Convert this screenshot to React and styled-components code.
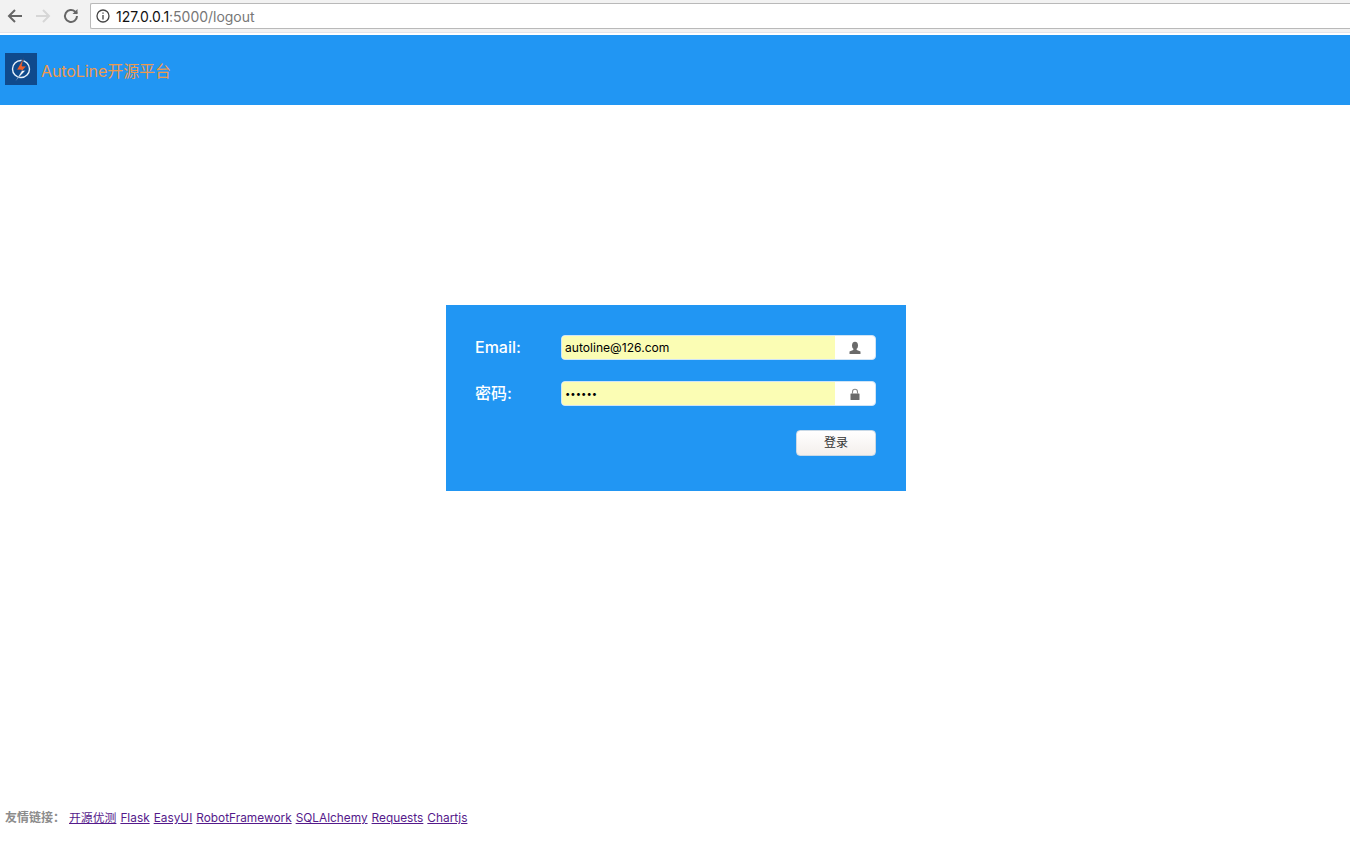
import React from 'react';
import styled, { createGlobalStyle } from 'styled-components';

const GlobalStyle = createGlobalStyle`
  html, body { margin: 0; padding: 0; background: #fff; }
  body { font-family: "Inter", "Liberation Sans", "Noto Sans CJK SC", sans-serif; overflow: hidden; }
`;

const Page = styled.div`
  height: 868px;
  display: flex;
  flex-direction: column;
`;

const BrowserBar = styled.div`
  height: 33px;
  flex: none;
  box-sizing: border-box;
  padding: 3px 0 0 5px;
  display: flex;
  align-items: flex-start;
  background: #f2f2f2;
  border-bottom: 1px solid #e4e4ea;
`;

const NavIcon = styled.svg`
  width: 20px;
  height: 20px;
  margin: 3px 8px 0 0;
  flex: none;
  fill: none;
  stroke: ${p => (p.$off ? '#d6d6d6' : '#666')};
  stroke-width: 2;
`;

const AddressBar = styled.div`
  flex: 1;
  height: 26px;
  box-sizing: border-box;
  margin-left: 1px;
  padding-left: 5px;
  display: flex;
  align-items: center;
  gap: 6px;
  background: #fff;
  border: 1px solid #b9b9b9;
  border-right: 0;
  border-radius: 2px 0 0 2px;
  font-size: 14px;
  letter-spacing: -0.02px;
  color: #777;
`;

const Host = styled.span`
  color: #111;
`;

const Header = styled.header`
  height: 70px;
  flex: none;
  margin-top: 2px;
  padding-left: 5px;
  display: flex;
  align-items: center;
  gap: 4px;
  background: #2196f3;
`;

const Logo = styled.svg`
  width: 32px;
  height: 32px;
  flex: none;
  margin-top: -2px;
`;

const Brand = styled.span`
  font-size: 16px;
  letter-spacing: -0.08px;
  color: #ee9a4d;
`;

const Main = styled.main`
  flex: 1;
  padding: 200px 0 0 2px;
  display: flex;
  justify-content: center;
  align-items: flex-start;
`;

const LoginBox = styled.form`
  width: 460px;
  height: 186px;
  box-sizing: border-box;
  padding: 30px 30px 0 29px;
  display: flex;
  flex-direction: column;
  background: #2196f3;
`;

const Row = styled.div`
  height: 25px;
  margin-bottom: 21px;
  display: flex;
  align-items: center;
`;

const Label = styled.label`
  width: 86px;
  flex: none;
  margin-top: -1px;
  font-size: 16px;
  line-height: 20px;
  font-weight: 500;
  color: #fff;
`;

const Field = styled.div`
  flex: 1;
  height: 25px;
  box-sizing: border-box;
  display: flex;
  align-items: stretch;
  overflow: hidden;
  background: #fff;
  border: 1px solid #cfe4f7;
  border-radius: 4px;
`;

const Input = styled.input`
  flex: 1;
  min-width: 0;
  box-sizing: border-box;
  padding: 0 3px;
  border: 0;
  outline: 0;
  background: #fbfdb4;
  font-family: inherit;
  font-size: ${p => (p.type === 'password' ? '9.5px' : '12.1px')};
  color: #000;
`;

const FieldIcon = styled.svg`
  width: 14px;
  height: 14px;
  flex: none;
  align-self: center;
  margin: 0 13px;
  fill: #6a6a6a;
`;

const Actions = styled.div`
  margin-top: 3px;
  display: flex;
  justify-content: flex-end;
`;

const SubmitButton = styled.button`
  width: 80px;
  height: 26px;
  padding: 0 0 3px;
  background: linear-gradient(#ffffff, #f3efec);
  border: 1px solid #c9d9e6;
  border-radius: 4px;
  font-family: inherit;
  font-size: 12px;
  color: #333;
`;

const Footer = styled.footer`
  height: 58px;
  flex: none;
  padding-left: 5px;
  display: flex;
  align-items: flex-start;
  font-size: 11.85px;
  line-height: 16px;
`;

const FooterLabel = styled.b`
  width: 64px;
  flex: none;
  font-size: 12px;
  color: #8c8c8c;
`;

const FooterLink = styled.a`
  margin-right: 4px;
  color: #551a8b;
  text-decoration: underline;
`;

const links = ['开源优测', 'Flask', 'EasyUI', 'RobotFramework', 'SQLAlchemy', 'Requests', 'Chartjs'];

export default function App() {
  return (
    <Page>
      <GlobalStyle />
      <BrowserBar>
        <NavIcon viewBox="0 0 20 20"><path d="M17 10H4M10 4l-6 6 6 6" /></NavIcon>
        <NavIcon viewBox="0 0 20 20" $off><path d="M3 10h13M10 4l6 6-6 6" /></NavIcon>
        <NavIcon viewBox="0 0 20 20"><path d="M16 10a6 6 0 1 1-1.8-4.3L16 7.5" /><path d="M16.5 3v5h-5" fill="#666" stroke="none" /></NavIcon>
        <AddressBar>
          <svg width="14" height="14" viewBox="0 0 14 14" fill="none" stroke="#444" strokeWidth="1.3">
            <circle cx="7" cy="7" r="6" />
            <path d="M7 6v4.5M7 3.4v1.4" />
          </svg>
          <span><Host>127.0.0.1</Host>:5000/logout</span>
        </AddressBar>
      </BrowserBar>

      <Header>
        <Logo viewBox="0 0 32 32">
          <rect width="32" height="32" fill="#0f4a8c" />
          <circle cx="16" cy="16" r="8.5" fill="none" stroke="#e8f2fb" strokeWidth="1.4" />
          <path d="M19 4l-7.500 13h5l-1 3 6-7h-4.500z" fill="#ef5f2a" stroke="#0f4a8c" strokeWidth="0.8" />
          <path d="M17 17.500h3.500L10.500 28z" fill="#f4f7fb" stroke="#0f4a8c" strokeWidth="0.4" />
        </Logo>
        <Brand>AutoLine开源平台</Brand>
      </Header>

      <Main>
        <LoginBox onSubmit={e => e.preventDefault()}>
          <Row>
            <Label>Email:</Label>
            <Field>
              <Input type="text" defaultValue="autoline@126.com" />
              <FieldIcon viewBox="0 0 14 14">
                <ellipse cx="7" cy="4.500" rx="3" ry="3.800" />
                <path d="M5.600 7.500h2.800l.4 1.600 3.700 1.400V13H1.500v-2.500l3.700-1.400z" />
              </FieldIcon>
            </Field>
          </Row>
          <Row>
            <Label>密码:</Label>
            <Field>
              <Input type="password" defaultValue="123456" />
              <FieldIcon viewBox="0 0 14 14">
                <path d="M4.500 6.500V4.800a2.500 2.500 0 0 1 5 0v1.700" fill="none" stroke="#8a8a8a" strokeWidth="1.100" />
                <rect x="2.500" y="6.500" width="9" height="6.500" rx="0.500" />
              </FieldIcon>
            </Field>
          </Row>
          <Actions>
            <SubmitButton type="submit">登录</SubmitButton>
          </Actions>
        </LoginBox>
      </Main>

      <Footer>
        <FooterLabel>友情链接：</FooterLabel>
        {links.map(name => (
          <FooterLink href="#" key={name}>{name}</FooterLink>
        ))}
      </Footer>
    </Page>
  );
}
